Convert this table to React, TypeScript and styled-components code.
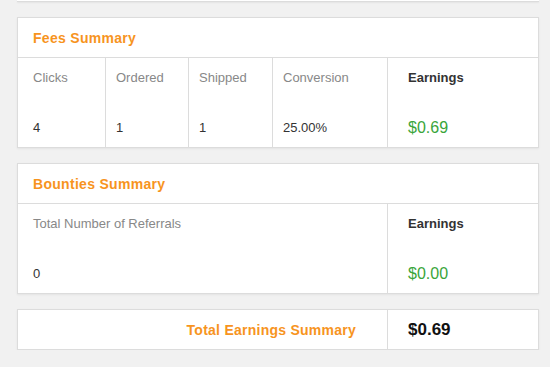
import styled, { createGlobalStyle } from "styled-components"

const Global = createGlobalStyle`
    body {
        margin: 0;
        background: #f1f1f1;
        font-family: "Liberation Sans", Arial, sans-serif;
    }
`

const App = () => {
    return (
        <Page>
            <Global />
            <TopStub />

            <Card>
                <Header>
                    <Title>Fees Summary</Title>
                </Header>
                <Row cols="87px 83px 84px 115px 1fr">
                    {fees.map((item, i) => (
                        <Cell key={item.label} pad={i === 0 ? 15 : 10}>
                            <Label>{item.label}</Label>
                            <Value>{item.value}</Value>
                        </Cell>
                    ))}
                    <Cell pad={20}>
                        <Label strong>Earnings</Label>
                        <Money>$0.69</Money>
                    </Cell>
                </Row>
            </Card>

            <Card>
                <Header>
                    <Title>Bounties Summary</Title>
                </Header>
                <Row cols="369px 1fr">
                    <Cell pad={15}>
                        <Label>Total Number of Referrals</Label>
                        <Value>0</Value>
                    </Cell>
                    <Cell pad={20}>
                        <Label strong>Earnings</Label>
                        <Money>$0.00</Money>
                    </Cell>
                </Row>
            </Card>

            <Card>
                <TotalRow>
                    <TotalLabel>Total Earnings Summary</TotalLabel>
                    <TotalValue>$0.69</TotalValue>
                </TotalRow>
            </Card>
        </Page>
    )
}

export default App


const fees = [
    { label: "Clicks", value: "4" },
    { label: "Ordered", value: "1" },
    { label: "Shipped", value: "1" },
    { label: "Conversion", value: "25.00%" },
]


const Page = styled.div`
    width: 522px;
    padding: 0 11px 0 17px;
    display: flex;
    flex-direction: column;
    gap: 15px;
`

const TopStub = styled.div`
    height: 1px;
    background: #fff;
    border-bottom: 1px solid #dcdcdc;
    box-shadow: 0 1px 2px rgba(0, 0, 0, 0.06);
`

const Card = styled.div`
    background: #fff;
    border: 1px solid #dcdcdc;
    box-shadow: 0 1px 2px rgba(0, 0, 0, 0.06);
`

const Header = styled.div`
    height: 39px;
    display: flex;
    align-items: center;
    padding: 0 15px;
    border-bottom: 1px solid #dcdcdc;
`

const Title = styled.h3`
    margin: 0;
    font-size: 14px;
    font-weight: bold;
    letter-spacing: 0.3px;
    color: #f7941e;
`

const Row = styled.div<{ cols: string }>`
    display: grid;
    grid-template-columns: ${(p) => p.cols};
    height: 89px;
`

const Cell = styled.div<{ pad: number }>`
    display: flex;
    flex-direction: column;
    justify-content: space-between;
    padding: 12px 8px 11px ${(p) => p.pad}px;
    border-left: 1px solid #dcdcdc;

    &:first-child {
        border-left: none;
    }
`

const Label = styled.div<{ strong?: boolean }>`
    font-size: 13px;
    line-height: 16px;
    color: ${(p) => (p.strong ? "#333" : "#888")};
    font-weight: ${(p) => (p.strong ? "bold" : "normal")};
`

const Value = styled.div`
    font-size: 13px;
    line-height: 16px;
    color: #333;
`

const Money = styled.div`
    font-size: 16px;
    line-height: 18px;
    margin-bottom: -1px;
    color: #3aa53a;
`

const TotalRow = styled.div`
    display: grid;
    grid-template-columns: 370px 1fr;
    height: 39px;
`

const TotalLabel = styled.div`
    display: flex;
    align-items: center;
    justify-content: flex-end;
    padding-right: 31px;
    font-size: 14px;
    font-weight: bold;
    letter-spacing: 0.25px;
    color: #f7941e;
    border-right: 1px solid #dcdcdc;
`

const TotalValue = styled.div`
    display: flex;
    align-items: center;
    padding-left: 20px;
    font-size: 17px;
    font-weight: bold;
    color: #111;
`
